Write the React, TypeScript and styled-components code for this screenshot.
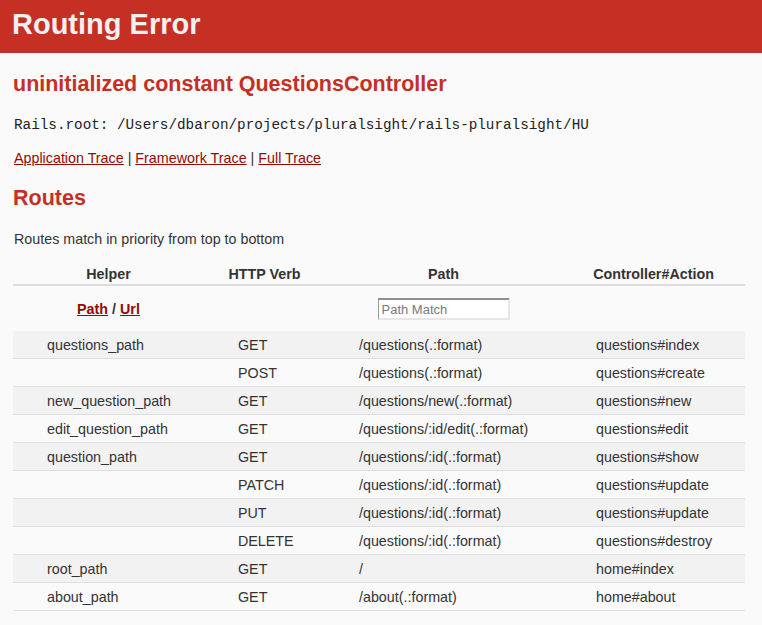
import React from "react";
import styled, { createGlobalStyle } from "styled-components";

const GlobalStyle = createGlobalStyle`
  html, body {
    margin: 0;
    padding: 0;
    background: #fafafa;
  }
  body {
    color: #333;
    font-family: "Liberation Sans", Arial, Helvetica, sans-serif;
    font-size: 14.3px;
    line-height: 18px;
  }
`;

const Header = styled.header`
  background: #c52f24;
  color: #f0f0f0;
  height: 53px;
  box-sizing: border-box;
  padding: 0 12px;
`;

const Title = styled.h1`
  margin: 0;
  font-size: 29px;
  font-weight: bold;
  line-height: 48px;
`;

const Main = styled.main`
  padding: 0 13px;
  display: flex;
  flex-direction: column;
`;

const Heading = styled.h2<{ $top: number }>`
  margin: ${(p) => p.$top}px 0 0;
  color: #c52f24;
  font-size: 21.5px;
  font-weight: bold;
  line-height: 25px;
`;

const RootPath = styled.pre`
  margin: 19px 0 0 1px;
  font-family: "Liberation Mono", "Courier New", monospace;
  font-size: 14.3px;
  line-height: 18px;
  color: #222;
`;

const TraceLinks = styled.p`
  margin: 15px 0 0 1px;
  line-height: 18px;
`;

const Link = styled.a<{ $bold?: boolean }>`
  color: #980905;
  text-decoration: underline;
  font-weight: ${(p) => (p.$bold ? "bold" : "normal")};
`;

const Sep = styled.span`
  color: #333;
`;

const Note = styled.p`
  margin: 19px 0 0 1px;
`;

const Table = styled.div`
  margin-top: 17px;
  width: 732px;
  display: flex;
  flex-direction: column;
`;

const Row = styled.div<{ $shade?: boolean }>`
  display: grid;
  grid-template-columns: 191px 121px 237px 183px;
  align-items: center;
  height: 28px;
  box-sizing: border-box;
  border-bottom: 1px solid #dedede;
  background: ${(p) => (p.$shade ? "#f2f2f2" : "transparent")};
`;

const HeadRow = styled.div`
  display: grid;
  grid-template-columns: 191px 121px 237px 183px;
  padding-bottom: 1px;
  border-bottom: 2px solid #dcdcdc;
`;

const FilterRow = styled.div`
  display: grid;
  grid-template-columns: 191px 121px 237px 183px;
  align-items: center;
  height: 45px;
`;

const Th = styled.div`
  text-align: center;
  font-weight: bold;
  line-height: 18px;
`;

const Centered = styled.div`
  display: flex;
  justify-content: center;
  align-items: center;
  font-weight: bold;
  gap: 4px;
`;

const Td = styled.div`
  padding-left: 34px;
  white-space: nowrap;
`;

const Search = styled.input`
  box-sizing: border-box;
  width: 132px;
  height: 22px;
  padding: 1px 3px 0;
  font-family: "Liberation Sans", Arial, sans-serif;
  font-size: 13px;
  background: #fff;
  border-style: solid;
  border-width: 2px 2px 2px 1px;
  border-color: #8f8f8f #e6e6e6 #e6e6e6 #9a9a9a;
  outline: none;
  &::placeholder {
    color: #7a7a7a;
  }
`;

const routes: [string, string, string, string][] = [
  ["questions_path", "GET", "/questions(.:format)", "questions#index"],
  ["", "POST", "/questions(.:format)", "questions#create"],
  ["new_question_path", "GET", "/questions/new(.:format)", "questions#new"],
  ["edit_question_path", "GET", "/questions/:id/edit(.:format)", "questions#edit"],
  ["question_path", "GET", "/questions/:id(.:format)", "questions#show"],
  ["", "PATCH", "/questions/:id(.:format)", "questions#update"],
  ["", "PUT", "/questions/:id(.:format)", "questions#update"],
  ["", "DELETE", "/questions/:id(.:format)", "questions#destroy"],
  ["root_path", "GET", "/", "home#index"],
  ["about_path", "GET", "/about(.:format)", "home#about"],
];

export default function App() {
  return (
    <>
      <GlobalStyle />
      <Header>
        <Title>Routing Error</Title>
      </Header>
      <Main>
        <Heading $top={19}>uninitialized constant QuestionsController</Heading>
        <RootPath>Rails.root: /Users/dbaron/projects/pluralsight/rails-pluralsight/HU</RootPath>
        <TraceLinks>
          <Link href="#">Application Trace</Link> <Sep>|</Sep>{" "}
          <Link href="#">Framework Trace</Link> <Sep>|</Sep>{" "}
          <Link href="#">Full Trace</Link>
        </TraceLinks>
        <Heading $top={19}>Routes</Heading>
        <Note>Routes match in priority from top to bottom</Note>
        <Table>
          <HeadRow>
            <Th>Helper</Th>
            <Th>HTTP Verb</Th>
            <Th>Path</Th>
            <Th>Controller#Action</Th>
          </HeadRow>
          <FilterRow>
            <Centered>
              <Link href="#" $bold>Path</Link>
              <span>/</span>
              <Link href="#" $bold>Url</Link>
            </Centered>
            <div />
            <Centered>
              <Search placeholder="Path Match" />
            </Centered>
            <div />
          </FilterRow>
          {routes.map((r, i) => (
            <Row key={i} $shade={i % 2 === 0}>
              <Td>{r[0]}</Td>
              <Td>{r[1]}</Td>
              <Td>{r[2]}</Td>
              <Td>{r[3]}</Td>
            </Row>
          ))}
        </Table>
      </Main>
    </>
  );
}
